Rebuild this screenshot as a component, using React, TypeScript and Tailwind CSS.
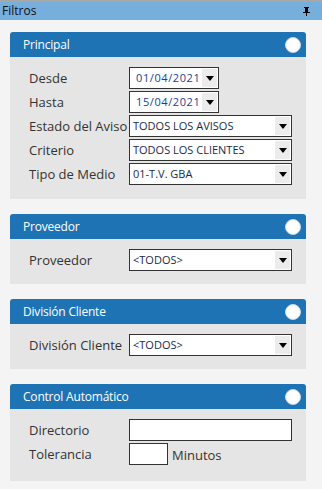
import React from "react";

const Arrow = () => (
  <div className="w-[15px] self-stretch bg-[#ececec] flex items-center justify-center">
    <svg width="8" height="5" viewBox="0 0 8 5"><path d="M0 0h8L4 5z" fill="#000" /></svg>
  </div>
);

const Select = ({ value, wide = true, date = false }: { value: string; wide?: boolean; date?: boolean }) => (
  <div className={`${wide ? "w-[163px]" : "w-[90px]"} h-[22px] border border-[#333] bg-white flex items-stretch pl-[3px] pr-[1px] py-[1px]`}>
    <div className={`flex-1 flex items-center ${date ? "pl-[3px] text-[11px] tracking-[0.6px] text-[#1c3f8a] font-['Open_Sans',sans-serif]" : "text-[11px] text-[#1b2a4a] font-['Open_Sans',sans-serif]"}`}>
      {value}
    </div>
    <Arrow />
  </div>
);

const Row = ({ label, children }: { label: string; children: React.ReactNode }) => (
  <div className="flex items-center h-[24px]">
    <div className="w-[100px] text-[13px] text-[#333] leading-none">{label}</div>
    {children}
  </div>
);

const Panel = ({ title, children, pb = "pb-[12px]" }: { title: string; children: React.ReactNode; pb?: string }) => (
  <div className="w-[296px]">
    <div className="h-[25px] bg-[#1e73b5] rounded-t-[3px] flex items-center justify-between pl-[13px] pr-[5px]">
      <span className="text-white text-[12px] tracking-[-0.2px]">{title}</span>
      <div className="w-[16px] h-[16px] rounded-full bg-white border border-[#c8d8e8]" />
    </div>
    <div className={`bg-[#e5e5e5] pl-[19px] pt-[9px] ${pb}`}>{children}</div>
  </div>
);

export default function App() {
  return (
    <div className="w-[322px] h-[489px] bg-[#f4f4f4] font-['Open_Sans',sans-serif] flex flex-col">
      <div className="h-[2px] bg-[#a7a7a7]" />
      <div className="h-[18px] bg-[#76aedc] flex items-center justify-between pl-[2px] pr-[12px]">
        <span className="text-[12px] text-[#111] leading-none">Filtros</span>
        <svg width="7" height="9" viewBox="0 0 7 9"><path d="M1 0h5v1H5v4h2v1H4v3H3V6H0V5h2V1H1z" fill="#000" /></svg>
      </div>
      <div className="pl-[10px] pt-[12px] flex flex-col gap-[15px]">
        <Panel title="Principal" pb="pb-[13px]">
          <Row label="Desde"><Select value="01/04/2021" wide={false} date /></Row>
          <Row label="Hasta"><Select value="15/04/2021" wide={false} date /></Row>
          <Row label="Estado del Aviso"><Select value="TODOS LOS AVISOS" /></Row>
          <Row label="Criterio"><Select value="TODOS LOS CLIENTES" /></Row>
          <Row label="Tipo de Medio"><Select value="01-T.V. GBA" /></Row>
        </Panel>
        <Panel title="Proveedor" pb="pb-[12px]">
          <Row label="Proveedor"><Select value="<TODOS>" /></Row>
        </Panel>
        <Panel title="División Cliente" pb="pb-[12px]">
          <Row label="División Cliente"><Select value="<TODOS>" /></Row>
        </Panel>
        <Panel title="Control Automático" pb="pb-[15px]">
          <Row label="Directorio"><div className="w-[163px] h-[22px] border border-[#333] bg-white" /></Row>
          <Row label="Tolerancia">
            <div className="w-[39px] h-[22px] border border-[#333] bg-white" />
            <span className="ml-[4px] text-[13px] text-[#333] mt-[3px]">Minutos</span>
          </Row>
        </Panel>
      </div>
    </div>
  );
}
